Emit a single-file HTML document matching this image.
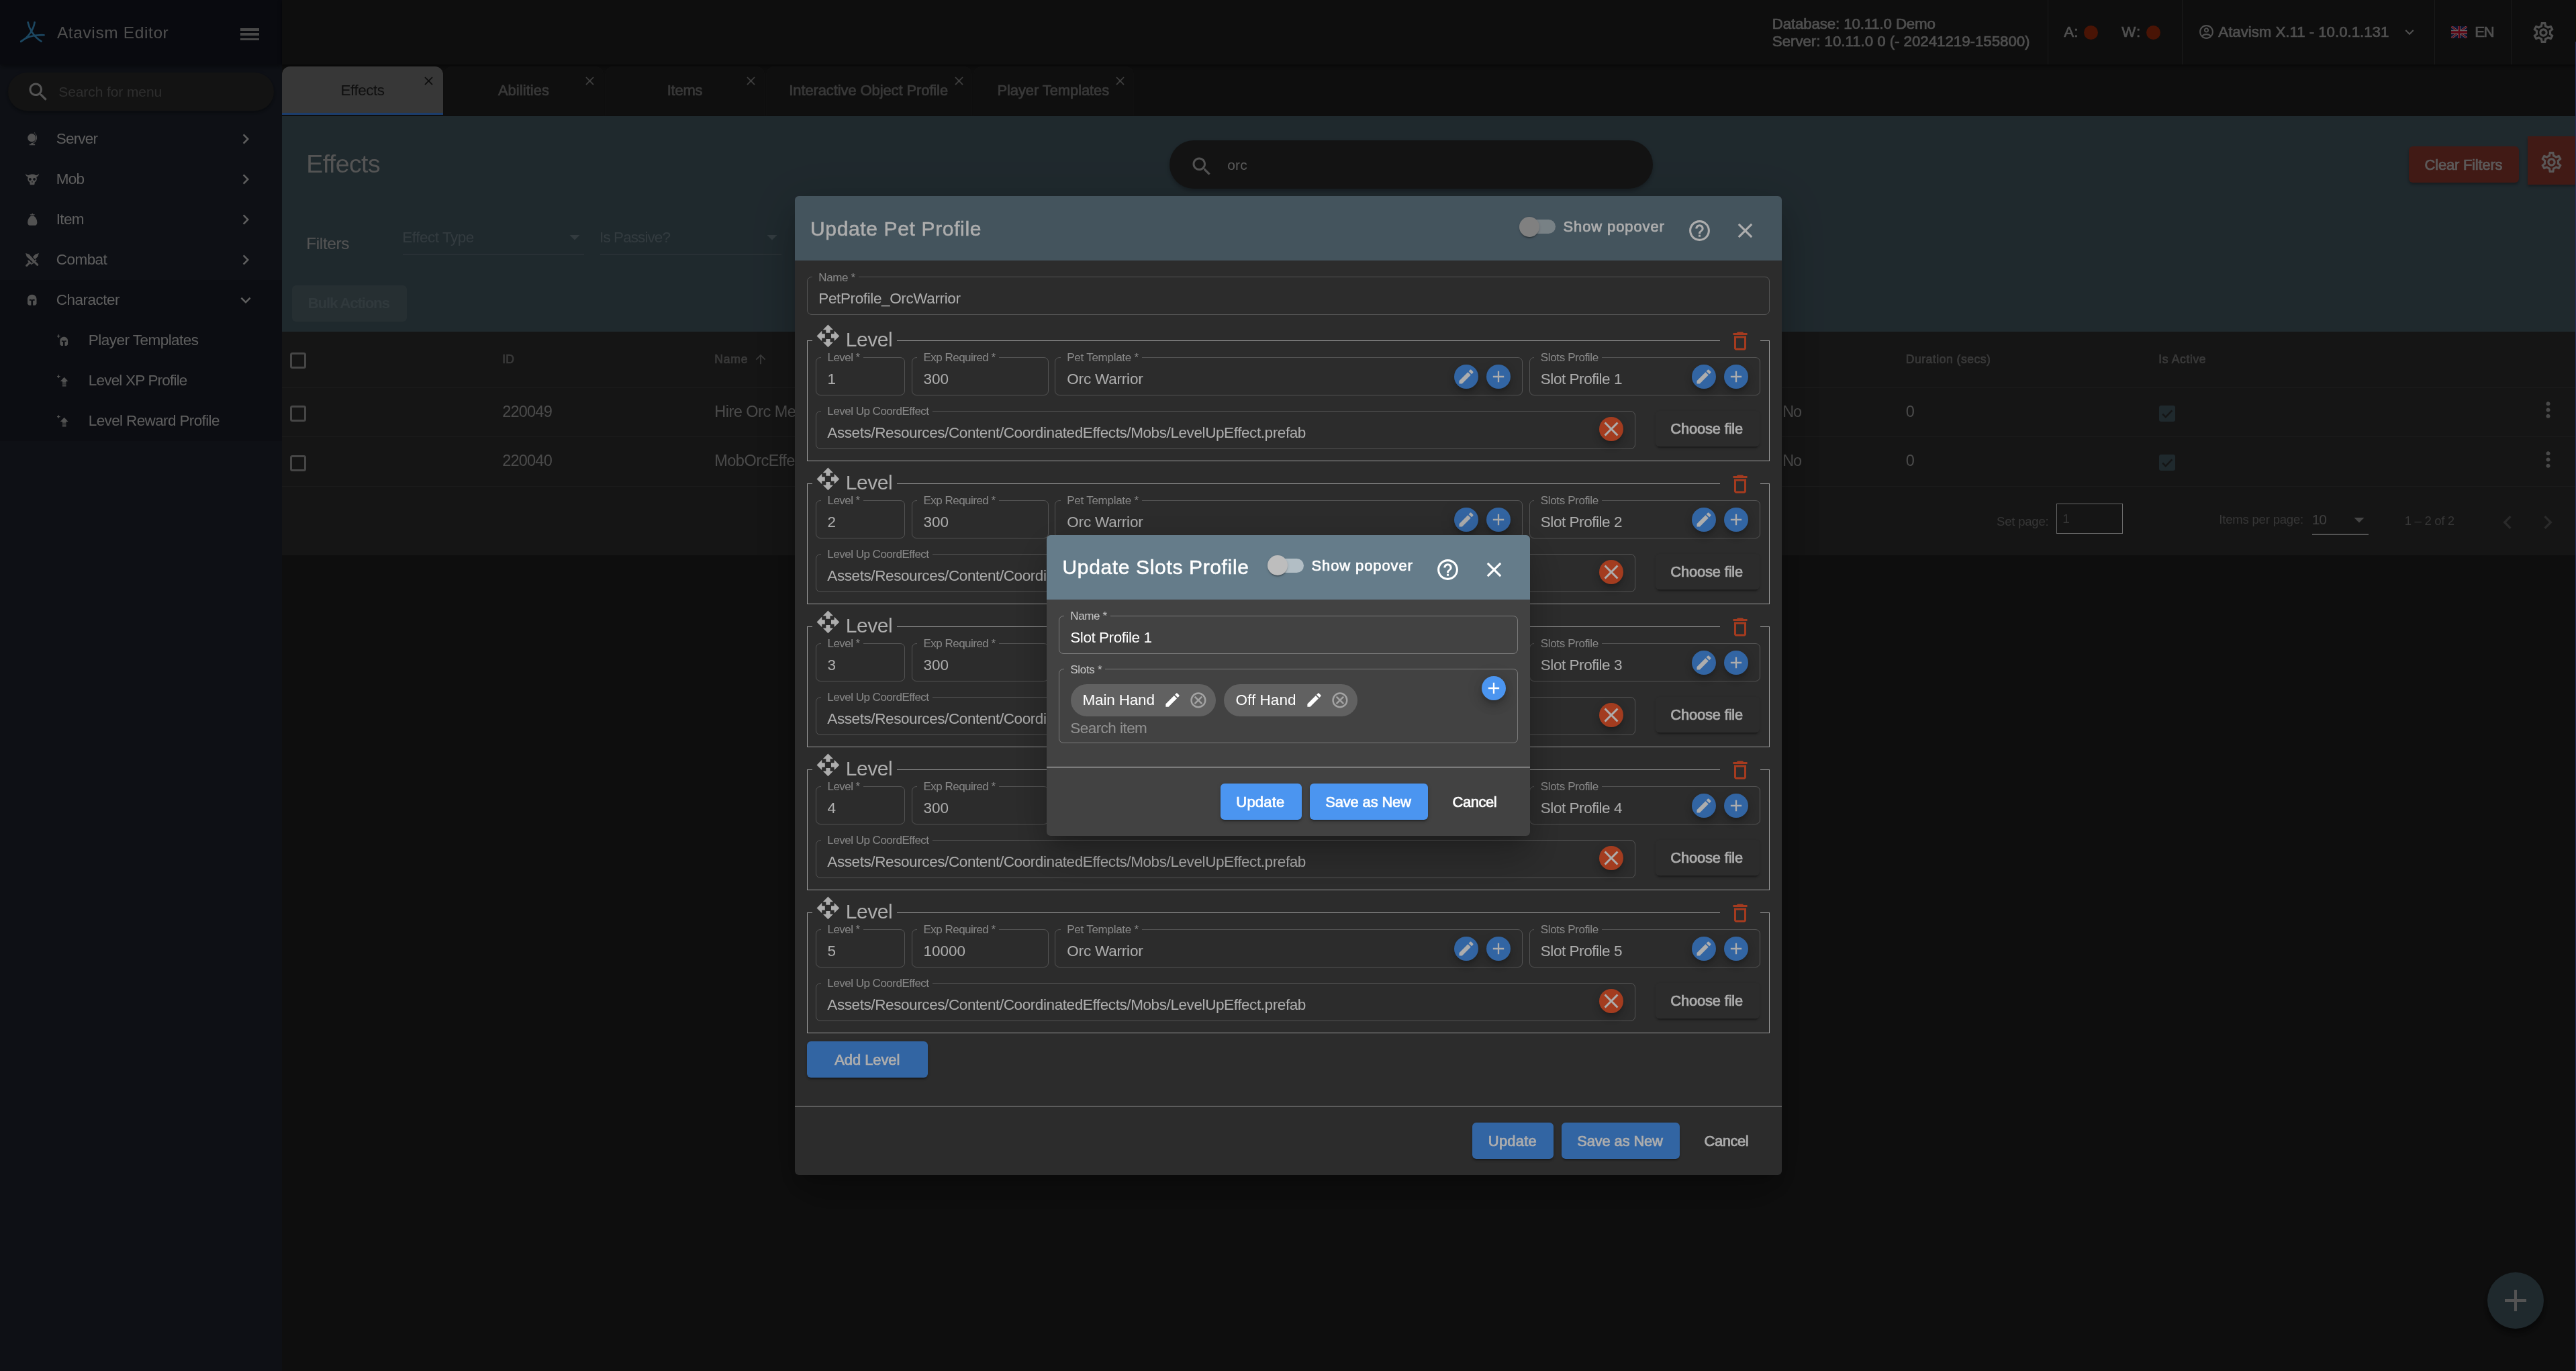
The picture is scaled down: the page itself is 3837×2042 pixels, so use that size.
<!DOCTYPE html>
<html lang="en"><head><meta charset="utf-8"><title>Atavism Editor</title>
<style>
html,body{margin:0;padding:0;background:#212121;}
body{width:3837px;height:2042px;position:relative;font-family:"Liberation Sans",Arial,sans-serif;}
.t{position:absolute;white-space:nowrap;line-height:1em;}
.sb{-webkit-text-stroke:0.7px currentColor;}
.mb{-webkit-text-stroke:0.5px currentColor;}
.ic{position:absolute;display:block;}
.backdrop{position:absolute;left:0;top:0;width:3837px;height:2042px;background:rgba(0,0,0,.32);}
aside,header,nav,main,section{display:block;}
#root{position:absolute;left:0;top:0;width:3837px;height:2042px;overflow:hidden;will-change:transform;}
</style></head><body><div id="root">
<aside id="sidebar">
<div style="position:absolute;left:0.00px;top:0.00px;width:420.00px;height:2042.00px;background:#202530;"></div>
<div style="position:absolute;left:0.00px;top:417.00px;width:420.00px;height:240.00px;background:#1c1e29;"></div>
<div style="position:absolute;left:0.00px;top:0.00px;width:420.00px;height:96.00px;background:#151722;box-shadow:0 3px 8px rgba(0,0,0,.45);"></div>
<svg class="ic" style="left:30px;top:32px" width="37" height="32" viewBox="0 0 37 32"><g fill="none" stroke="#3f9bd4" stroke-width="2.6" stroke-linecap="round"><path d="M11.6 1.2C13 9 19 22 31.5 29.6"/><path d="M21.6 1.2C20 12 12 24 1.2 29.8"/><path d="M1.2 29.8C9 23 22 19.6 35.6 20.2"/></g></svg>
<span class="t" style="left:84.90px;top:36.86px;font-size:24.5px;color:#ababab;letter-spacing:0.612px;">Atavism Editor</span>
<div style="position:absolute;left:358.20px;top:42.20px;width:27.80px;height:3.90px;background:#9c9c9c;"></div>
<div style="position:absolute;left:358.20px;top:49.40px;width:27.80px;height:3.90px;background:#9c9c9c;"></div>
<div style="position:absolute;left:358.20px;top:56.60px;width:27.80px;height:3.90px;background:#9c9c9c;"></div>
<div style="position:absolute;left:12.00px;top:108.00px;width:396.00px;height:57.00px;background:#2a2a2a;border-radius:29px;box-shadow:0 3px 6px rgba(0,0,0,.35);"></div>
<svg class="ic" style="left:39.20px;top:119.20px;" width="36" height="36" viewBox="0 0 24 24"><path fill="#b9b9b9" d="M15.5 14h-.79l-.28-.27C15.41 12.59 16 11.11 16 9.5 16 5.91 13.09 3 9.5 3S3 5.91 3 9.5 5.91 16 9.5 16c1.61 0 3.09-.59 4.23-1.57l.27.28v.79l5 4.99L20.49 19l-4.99-5zm-6 0C7.01 14 5 11.99 5 9.5S7.01 5 9.5 5 14 7.01 14 9.5 11.99 14 9.5 14z"/></svg>
<span class="t" style="left:87.30px;top:126.32px;font-size:21px;color:#666;letter-spacing:-0.100px;">Search for menu</span>
<svg class="ic" style="left:37.0px;top:196.0px" width="22" height="22" viewBox="0 0 24 24" fill="#b4b4b4"><circle cx="11.2" cy="10" r="6.6"/><path d="M15.5 2.2a9.2 9.2 0 0 1-1.6 16.3v1.6h2.6v1.9H7.5v-1.9h2.7v-1.3a9.3 9.3 0 0 0 6.9-14.4z" /><path d="M14.8 2.6l1.2-1.4.6.5-1.2 1.4z"/></svg>
<span class="t" style="left:83.80px;top:195.95px;font-size:22.5px;color:#cdcdcd;letter-spacing:-0.837px;">Server</span>
<svg class="ic" style="left:351.00px;top:192.00px;" width="30" height="30" viewBox="0 0 24 24"><path fill="#cfcfcf" d="M10 6L8.59 7.41 13.17 12l-4.58 4.59L10 18l6-6z"/></svg>
<svg class="ic" style="left:37.0px;top:256.0px" width="22" height="22" viewBox="0 0 24 24" fill="#b4b4b4"><path d="M1 2.6c.4 3.2 1.9 4.9 4.3 5.5A8 8 0 0 0 4.6 11.4c0 2.5 1.3 4.3 3.1 5.3l.6 3.6c.1.5.5.8 1 .8h5.4c.5 0 .9-.3 1-.8l.6-3.6c1.8-1 3.1-2.8 3.1-5.3 0-1.2-.3-2.3-.7-3.3 2.400-.6 3.900-2.300 4.300-5.500-1.500 2-3.400 2.700-5.400 2.800A7.300 7.300 0 0 0 12 3.900c-2.100 0-3.900.600-5.600 1.500C4.400 5.300 2.500 4.600 1 2.600zM8.600 9.800c1.200 0 2.100 1 2.100 2.200s-.9 2.100-2.100 2.100-2.100-.900-2.100-2.100.900-2.200 2.100-2.200zm6.800 0c1.200 0 2.100 1 2.100 2.200s-.9 2.100-2.100 2.100-2.100-.900-2.100-2.100.900-2.200 2.100-2.200zM12 14.600l1.200 2.400h-2.400z" fill-rule="evenodd"/></svg>
<span class="t" style="left:83.80px;top:255.95px;font-size:22.5px;color:#cdcdcd;letter-spacing:-0.757px;">Mob</span>
<svg class="ic" style="left:351.00px;top:252.00px;" width="30" height="30" viewBox="0 0 24 24"><path fill="#cfcfcf" d="M10 6L8.59 7.41 13.17 12l-4.58 4.59L10 18l6-6z"/></svg>
<svg class="ic" style="left:37.75px;top:316.75px" width="20.5" height="20.5" viewBox="0 0 24 24" fill="#b4b4b4"><path d="M9.300 4.800L7.600 2.300l2.200.600L12 1l2.200 1.900 2.200-.600-1.700 2.500zM9 5.800h6c3.300 2.300 5.300 6.600 5.300 11.200 0 3-1.600 5-3.600 5H7.300c-2 0-3.600-2-3.600-5C3.700 12.400 5.700 8.100 9 5.800z"/></svg>
<span class="t" style="left:83.80px;top:315.95px;font-size:22.5px;color:#cdcdcd;letter-spacing:-0.690px;">Item</span>
<svg class="ic" style="left:351.00px;top:312.00px;" width="30" height="30" viewBox="0 0 24 24"><path fill="#cfcfcf" d="M10 6L8.59 7.41 13.17 12l-4.58 4.59L10 18l6-6z"/></svg>
<svg class="ic" style="left:37.0px;top:376.0px" width="22" height="22" viewBox="0 0 24 24" fill="#b4b4b4"><path d="M1.200 1.200l5.700 1.700 9.100 9.800 1.700-1.700 1.500 1.500-2 2 4.400 4.400c.7.700.7 1.700 0 2.400s-1.700.7-2.400 0l-4.400-4.400-2 2-1.500-1.500 1.700-1.700L3 6.700zM22.800 1.200L21 6.700l-4.600 4.400-3.500-3.700 4.200-4.500zM8.900 14.900l2.200 2.300-.200.200 1.200 1.200-1.500 1.500-2-2-4.400 4.400c-.7.700-1.700.7-2.400 0s-.7-1.700 0-2.400l4.400-4.400-2-2 1.500-1.500 1.700 1.700.800-.800z"/></svg>
<span class="t" style="left:83.80px;top:375.95px;font-size:22.5px;color:#cdcdcd;letter-spacing:-0.548px;">Combat</span>
<svg class="ic" style="left:351.00px;top:372.00px;" width="30" height="30" viewBox="0 0 24 24"><path fill="#cfcfcf" d="M10 6L8.59 7.41 13.17 12l-4.58 4.59L10 18l6-6z"/></svg>
<svg class="ic" style="left:38.25px;top:437.25px" width="19.5" height="19.5" viewBox="0 0 24 24" fill="#b4b4b4"><path d="M12 2.200c-5 0-8.300 3.600-8.300 8.600v8.500l2.600 2.600h4v-8.600H7.200v-2.500h3.700l1.100 1.700 1.100-1.700h3.700v2.500h-3.100v8.600h4l2.600-2.600v-8.500c0-5-3.300-8.600-8.300-8.600z"/></svg>
<span class="t" style="left:83.80px;top:435.95px;font-size:22.5px;color:#cdcdcd;letter-spacing:-0.505px;">Character</span>
<svg class="ic" style="left:351.00px;top:432.00px;" width="30" height="30" viewBox="0 0 24 24"><path fill="#cfcfcf" d="M16.59 8.59L12 13.17 7.41 8.59 6 10l6 6 6-6z"/></svg>
<svg class="ic" style="left:84.0px;top:497.0px" width="20" height="20" viewBox="0 0 24 24" fill="#b4b4b4"><path d="M13.500 5.600c-4.200 0-7 3-7 7.200v6.600l2.200 2.200h3.200v-7.200H9.400v-2h3.100l1 1.400 1-1.400h3.100v2h-2.500v7.200h3.200l2.200-2.200v-6.600c0-4.200-2.800-7.200-7-7.200zM3.200 1.600h1.500v2h2v1.500h-2v2H3.200v-2h-2V3.600h2z"/></svg>
<span class="t" style="left:131.80px;top:495.95px;font-size:22.5px;color:#cdcdcd;letter-spacing:-0.526px;">Player Templates</span>
<svg class="ic" style="left:84.0px;top:557.0px" width="20" height="20" viewBox="0 0 24 24" fill="#b4b4b4"><path d="M14 5.800l7 7.400h-3.600v2H10.600v-2H7zM10.600 16.200h6.800v1.500h-6.800zm0 2.300h6.800V20h-6.800zm0 2.300h6.800v1.500h-6.800zM3.200 1.600h1.500v2h2v1.500h-2v2H3.200v-2h-2V3.600h2z"/></svg>
<span class="t" style="left:131.80px;top:555.95px;font-size:22.5px;color:#cdcdcd;letter-spacing:-0.808px;">Level XP Profile</span>
<svg class="ic" style="left:84.0px;top:617.0px" width="20" height="20" viewBox="0 0 24 24" fill="#b4b4b4"><path d="M14 5.800l7 7.400h-3.600v2H10.600v-2H7zM10.600 16.200h6.800v1.500h-6.800zm0 2.300h6.800V20h-6.800zm0 2.300h6.800v1.500h-6.800zM3.200 1.600h1.500v2h2v1.500h-2v2H3.200v-2h-2V3.600h2z"/></svg>
<span class="t" style="left:131.80px;top:615.95px;font-size:22.5px;color:#cdcdcd;letter-spacing:-0.630px;">Level Reward Profile</span>
</aside>
<header id="topbar">
<div style="position:absolute;left:420.00px;top:0.00px;width:3417.00px;height:172.00px;background:#1f1f1f;"></div>
<div style="position:absolute;left:420.00px;top:0.00px;width:3417.00px;height:96.00px;background:#1f1f1f;box-shadow:0 2px 5px rgba(0,0,0,.55);"></div>
<span class="t sb" style="left:2639.80px;top:25.20px;font-size:22.33px;color:#adadad;letter-spacing:-0.164px;">Database: 10.11.0 Demo</span>
<span class="t sb" style="left:2639.80px;top:50.70px;font-size:22.33px;color:#adadad;letter-spacing:-0.052px;">Server: 10.11.0 0 (- 20241219-155800)</span>
<div style="position:absolute;left:3049.50px;top:0.00px;width:1.00px;height:96.00px;background:#3a3a3a;"></div>
<div style="position:absolute;left:3249.50px;top:0.00px;width:1.00px;height:96.00px;background:#3a3a3a;"></div>
<div style="position:absolute;left:3625.50px;top:0.00px;width:1.00px;height:96.00px;background:#3a3a3a;"></div>
<div style="position:absolute;left:3739.50px;top:0.00px;width:1.00px;height:96.00px;background:#3a3a3a;"></div>
<span class="t sb" style="left:3074.30px;top:37.40px;font-size:22.33px;color:#adadad;letter-spacing:-0.049px;">A:</span>
<div style="position:absolute;left:3103.50px;top:37.50px;width:21.00px;height:21.00px;background:#a02d0c;border-radius:50%;"></div>
<span class="t sb" style="left:3160.30px;top:37.40px;font-size:22.33px;color:#adadad;letter-spacing:1.062px;">W:</span>
<div style="position:absolute;left:3196.50px;top:37.50px;width:21.00px;height:21.00px;background:#a02d0c;border-radius:50%;"></div>
<svg class="ic" style="left:3274.30px;top:35.00px;" width="25" height="25" viewBox="0 0 24 24"><path fill="#adadad" d="M12 2C6.48 2 2 6.48 2 12s4.48 10 10 10 10-4.48 10-10S17.52 2 12 2zM7.07 18.28c.43-.9 3.05-1.78 4.93-1.78s4.51.88 4.93 1.78C15.57 19.36 13.86 20 12 20s-3.57-.64-4.93-1.72zm11.29-1.45c-1.43-1.74-4.9-2.33-6.36-2.33s-4.93.59-6.36 2.33C4.62 15.49 4 13.82 4 12c0-4.41 3.59-8 8-8s8 3.59 8 8c0 1.82-.62 3.49-1.64 4.83zM12 6c-1.94 0-3.5 1.56-3.5 3.5S10.06 13 12 13s3.5-1.56 3.5-3.5S13.94 6 12 6zm0 5c-.83 0-1.5-.67-1.5-1.5S11.17 8 12 8s1.5.67 1.5 1.5S12.83 11 12 11z"/></svg>
<span class="t sb" style="left:3304.30px;top:37.40px;font-size:22.33px;color:#adadad;letter-spacing:-0.051px;">Atavism X.11 - 10.0.1.131</span>
<svg class="ic" style="left:3576.00px;top:34.50px;" width="26" height="26" viewBox="0 0 24 24"><path fill="#adadad" d="M16.59 8.59L12 13.17 7.41 8.59 6 10l6 6 6-6z"/></svg>
<svg class="ic" style="left:3650.5px;top:39px" width="24" height="18" viewBox="0 0 60 30" preserveAspectRatio="none"><clipPath id="fc"><path d="M0 0v30h60V0z"/></clipPath><g clip-path="url(#fc)"><path d="M0 0v30h60V0z" fill="#1a2a6c"/><path d="M0 0l60 30m0-30L0 30" stroke="#ddd" stroke-width="6"/><path d="M0 0l60 30m0-30L0 30" stroke="#c8102e" stroke-width="3"/><path d="M30 0v30M0 15h60" stroke="#ddd" stroke-width="10"/><path d="M30 0v30M0 15h60" stroke="#c8102e" stroke-width="6"/></g></svg>
<span class="t sb" style="left:3686.30px;top:37.40px;font-size:22.33px;color:#adadad;letter-spacing:-1.636px;">EN</span>
<svg class="ic" style="left:3769.50px;top:29.50px;" width="37" height="37" viewBox="0 0 24 24"><path fill="#adadad" d="M19.43 12.98c.04-.32.07-.64.07-.98 0-.34-.03-.66-.07-.98l2.11-1.65c.19-.15.24-.42.12-.64l-2-3.46c-.09-.16-.26-.25-.44-.25-.06 0-.12.01-.17.03l-2.49 1c-.52-.4-1.08-.73-1.69-.98l-.38-2.65C14.46 2.18 14.25 2 14 2h-4c-.25 0-.46.18-.49.42l-.38 2.65c-.61.25-1.17.59-1.69.98l-2.49-1c-.06-.02-.12-.03-.18-.03-.17 0-.34.09-.43.25l-2 3.46c-.13.22-.07.49.12.64l2.11 1.65c-.04.32-.07.65-.07.98 0 .33.03.66.07.98l-2.11 1.65c-.19.15-.24.42-.12.64l2 3.46c.09.16.26.25.44.25.06 0 .12-.01.17-.03l2.49-1c.52.4 1.08.73 1.69.98l.38 2.65c.03.24.24.42.49.42h4c.25 0 .46-.18.49-.42l.38-2.65c.61-.25 1.17-.59 1.69-.98l2.49 1c.06.02.12.03.18.03.17 0 .34-.09.43-.25l2-3.46c.12-.22.07-.49-.12-.64l-2.11-1.65zm-1.98-1.71c.04.31.05.52.05.73 0 .21-.02.43-.05.73l-.14 1.13.89.7 1.08.84-.7 1.21-1.27-.51-1.04-.42-.9.68c-.43.32-.84.56-1.25.73l-1.06.43-.16 1.13-.2 1.35h-1.4l-.19-1.35-.16-1.13-1.06-.43c-.43-.18-.83-.41-1.23-.71l-.91-.7-1.06.43-1.27.51-.7-1.21 1.08-.84.89-.7-.14-1.13c-.03-.31-.05-.54-.05-.74s.02-.43.05-.73l.14-1.13-.89-.7-1.08-.84.7-1.21 1.27.51 1.04.42.9-.68c.43-.32.84-.56 1.25-.73l1.06-.43.16-1.13.2-1.35h1.39l.19 1.35.16 1.13 1.06.43c.43.18.83.41 1.23.71l.91.7 1.06-.43 1.27-.51.7 1.21-1.07.85-.89.7.14 1.13zM12 8c-2.21 0-4 1.79-4 4s1.79 4 4 4 4-1.79 4-4-1.79-4-4-4zm0 6c-1.1 0-2-.9-2-2s.9-2 2-2 2 .9 2 2-.9 2-2 2z"/></svg>
</header>
<nav id="tabs">
<div style="position:absolute;left:420.00px;top:99.00px;width:240.00px;height:72.00px;background:#787878;border-radius:12px 12px 0 0;border-bottom:3.5px solid #3f86ec;box-sizing:border-box;"></div>
<span class="t" style="left:507.50px;top:123.55px;font-size:22.5px;color:#222;letter-spacing:-0.481px;">Effects</span>
<svg class="ic" style="left:628.25px;top:110.25px;" width="21" height="21" viewBox="0 0 24 24"><path fill="#1c1c1c" d="M19 6.41L17.59 5 12 10.59 6.41 5 5 6.41 10.59 12 5 17.59 6.41 19 12 13.41 17.59 19 19 17.59 13.41 12z"/></svg>
<div style="position:absolute;left:661.00px;top:99.00px;width:238.00px;height:73.00px;background:#222;border-radius:12px 12px 0 0;border:1px solid #262626;border-bottom:0;box-sizing:border-box;"></div>
<span class="t sb" style="left:741.88px;top:123.53px;font-size:21.94px;color:#7c7c7c;letter-spacing:0.072px;">Abilities</span>
<svg class="ic" style="left:868.20px;top:110.25px;" width="21" height="21" viewBox="0 0 24 24"><path fill="#8a8a8a" d="M19 6.41L17.59 5 12 10.59 6.41 5 5 6.41 10.59 12 5 17.59 6.41 19 12 13.41 17.59 19 19 17.59 13.41 12z"/></svg>
<div style="position:absolute;left:901.00px;top:99.00px;width:238.00px;height:73.00px;background:#222;border-radius:12px 12px 0 0;border:1px solid #262626;border-bottom:0;box-sizing:border-box;"></div>
<span class="t sb" style="left:993.75px;top:123.53px;font-size:21.94px;color:#7c7c7c;letter-spacing:-0.228px;">Items</span>
<svg class="ic" style="left:1108.20px;top:110.25px;" width="21" height="21" viewBox="0 0 24 24"><path fill="#8a8a8a" d="M19 6.41L17.59 5 12 10.59 6.41 5 5 6.41 10.59 12 5 17.59 6.41 19 12 13.41 17.59 19 19 17.59 13.41 12z"/></svg>
<div style="position:absolute;left:1141.00px;top:99.00px;width:307.40px;height:73.00px;background:#222;border-radius:12px 12px 0 0;border:1px solid #262626;border-bottom:0;box-sizing:border-box;"></div>
<span class="t sb" style="left:1175.30px;top:123.53px;font-size:21.94px;color:#7c7c7c;letter-spacing:-0.087px;">Interactive Object Profile</span>
<svg class="ic" style="left:1417.60px;top:110.25px;" width="21" height="21" viewBox="0 0 24 24"><path fill="#8a8a8a" d="M19 6.41L17.59 5 12 10.59 6.41 5 5 6.41 10.59 12 5 17.59 6.41 19 12 13.41 17.59 19 19 17.59 13.41 12z"/></svg>
<div style="position:absolute;left:1450.40px;top:99.00px;width:238.60px;height:73.00px;background:#222;border-radius:12px 12px 0 0;border:1px solid #262626;border-bottom:0;box-sizing:border-box;"></div>
<span class="t sb" style="left:1485.50px;top:123.53px;font-size:21.94px;color:#7c7c7c;letter-spacing:-0.080px;">Player Templates</span>
<svg class="ic" style="left:1658.20px;top:110.25px;" width="21" height="21" viewBox="0 0 24 24"><path fill="#8a8a8a" d="M19 6.41L17.59 5 12 10.59 6.41 5 5 6.41 10.59 12 5 17.59 6.41 19 12 13.41 17.59 19 19 17.59 13.41 12z"/></svg>
</nav>
<main id="content">
<div style="position:absolute;left:420.00px;top:172.50px;width:3417.00px;height:321.50px;background:#455a64;"></div>
<span class="t" style="left:456.30px;top:225.69px;font-size:37.4px;color:#b9b9b9;letter-spacing:-0.556px;">Effects</span>
<div style="position:absolute;left:1742.00px;top:209.00px;width:720.00px;height:72.00px;background:#2b2b2b;border-radius:36px;box-shadow:0 3px 6px rgba(0,0,0,.3);"></div>
<svg class="ic" style="left:1772.00px;top:230.40px;" width="36" height="36" viewBox="0 0 24 24"><path fill="#b4b4b4" d="M15.5 14h-.79l-.28-.27C15.41 12.59 16 11.11 16 9.5 16 5.91 13.09 3 9.5 3S3 5.91 3 9.5 5.91 16 9.5 16c1.61 0 3.09-.59 4.23-1.57l.27.28v.79l5 4.99L20.49 19l-4.99-5zm-6 0C7.01 14 5 11.99 5 9.5S7.01 5 9.5 5 14 7.01 14 9.5 11.99 14 9.5 14z"/></svg>
<span class="t" style="left:1828.30px;top:235.22px;font-size:21px;color:#c4c4c4;letter-spacing:0.109px;">orc</span>
<div style="position:absolute;left:3588.00px;top:218.00px;width:164.00px;height:53.50px;background:#8f3a30;border-radius:6px;box-shadow:0 3px 4px rgba(0,0,0,.3);"></div>
<span class="t sb" style="left:3611.55px;top:234.53px;font-size:21.94px;color:#c9c4c4;letter-spacing:-0.193px;">Clear Filters</span>
<div style="position:absolute;left:3765.00px;top:203.00px;width:72.00px;height:71.50px;background:#8f3a30;box-shadow:0 3px 4px rgba(0,0,0,.3);"></div>
<svg class="ic" style="left:3782.00px;top:222.75px;" width="37" height="37" viewBox="0 0 24 24"><path fill="#c4bdbd" d="M19.43 12.98c.04-.32.07-.64.07-.98 0-.34-.03-.66-.07-.98l2.11-1.65c.19-.15.24-.42.12-.64l-2-3.46c-.09-.16-.26-.25-.44-.25-.06 0-.12.01-.17.03l-2.49 1c-.52-.4-1.08-.73-1.69-.98l-.38-2.65C14.46 2.18 14.25 2 14 2h-4c-.25 0-.46.18-.49.42l-.38 2.65c-.61.25-1.17.59-1.69.98l-2.49-1c-.06-.02-.12-.03-.18-.03-.17 0-.34.09-.43.25l-2 3.46c-.13.22-.07.49.12.64l2.11 1.65c-.04.32-.07.65-.07.98 0 .33.03.66.07.98l-2.11 1.65c-.19.15-.24.42-.12.64l2 3.46c.09.16.26.25.44.25.06 0 .12-.01.17-.03l2.49-1c.52.4 1.08.73 1.69.98l.38 2.65c.03.24.24.42.49.42h4c.25 0 .46-.18.49-.42l.38-2.65c.61-.25 1.17-.59 1.69-.98l2.49 1c.06.02.12.03.18.03.17 0 .34-.09.43-.25l2-3.46c.12-.22.07-.49-.12-.64l-2.11-1.65zm-1.98-1.71c.04.31.05.52.05.73 0 .21-.02.43-.05.73l-.14 1.13.89.7 1.08.84-.7 1.21-1.27-.51-1.04-.42-.9.68c-.43.32-.84.56-1.25.73l-1.06.43-.16 1.13-.2 1.35h-1.4l-.19-1.35-.16-1.13-1.06-.43c-.43-.18-.83-.41-1.23-.71l-.91-.7-1.06.43-1.27.51-.7-1.21 1.08-.84.89-.7-.14-1.13c-.03-.31-.05-.54-.05-.74s.02-.43.05-.73l.14-1.13-.89-.7-1.08-.84.7-1.21 1.27.51 1.04.42.9-.68c.43-.32.84-.56 1.25-.73l1.06-.43.16-1.13.2-1.35h1.39l.19 1.35.16 1.13 1.06.43c.43.18.83.41 1.23.71l.91.7 1.06-.43 1.27-.51.7 1.21-1.07.85-.89.7.14 1.13zM12 8c-2.21 0-4 1.79-4 4s1.79 4 4 4 4-1.79 4-4-1.79-4-4-4zm0 6c-1.1 0-2-.9-2-2s.9-2 2-2 2 .9 2 2-.9 2-2 2z"/></svg>
<span class="t" style="left:456.30px;top:351.11px;font-size:24.5px;color:#b9b9b9;letter-spacing:-0.421px;">Filters</span>
<span class="t" style="left:599.30px;top:342.80px;font-size:22.5px;color:#70828b;letter-spacing:-0.477px;">Effect Type</span>
<div style="position:absolute;left:600.00px;top:378.00px;width:269.50px;height:1.50px;background:#586a73;"></div>
<svg class="ic" style="left:838.00px;top:335.00px;" width="36" height="36" viewBox="0 0 24 24"><path fill="#70828b" d="M7 10l5 5 5-5z"/></svg>
<span class="t" style="left:893.05px;top:342.80px;font-size:22.5px;color:#70828b;letter-spacing:-0.914px;">Is Passive?</span>
<div style="position:absolute;left:893.75px;top:378.00px;width:269.75px;height:1.50px;background:#586a73;"></div>
<svg class="ic" style="left:1132.00px;top:335.00px;" width="36" height="36" viewBox="0 0 24 24"><path fill="#70828b" d="M7 10l5 5 5-5z"/></svg>
<div style="position:absolute;left:435.00px;top:425.00px;width:170.50px;height:53.50px;background:#54676f;border-radius:6px;"></div>
<span class="t" style="left:458.55px;top:440.80px;font-size:22.5px;color:#6a7c84;letter-spacing:-1.286px;font-weight:700;">Bulk Actions</span>
<div style="position:absolute;left:420.00px;top:494.00px;width:3417.00px;height:333.00px;background:#2e2e2e;"></div>
<div style="position:absolute;left:420.00px;top:576.50px;width:3417.00px;height:1.50px;background:#3d3d3d;"></div>
<div style="position:absolute;left:420.00px;top:649.50px;width:3417.00px;height:1.50px;background:#3d3d3d;"></div>
<div style="position:absolute;left:420.00px;top:723.50px;width:3417.00px;height:1.50px;background:#3d3d3d;"></div>
<div style="position:absolute;left:432.00px;top:525.00px;width:24.00px;height:24.00px;border:3px solid #9a9a9a;border-radius:3.5px;box-sizing:border-box;"></div>
<div style="position:absolute;left:432.00px;top:604.00px;width:24.00px;height:24.00px;border:3px solid #9a9a9a;border-radius:3.5px;box-sizing:border-box;"></div>
<div style="position:absolute;left:432.00px;top:677.50px;width:24.00px;height:24.00px;border:3px solid #9a9a9a;border-radius:3.5px;box-sizing:border-box;"></div>
<span class="t sb" style="left:748.30px;top:526.74px;font-size:17.55px;color:#7d7d7d;letter-spacing:-0.025px;">ID</span>
<span class="t sb" style="left:1064.30px;top:526.74px;font-size:17.55px;color:#7d7d7d;letter-spacing:0.796px;">Name</span>
<svg class="ic" style="left:1122.00px;top:523.70px;" width="22" height="22" viewBox="0 0 24 24"><path fill="#7d7d7d" d="M4 12l1.41 1.41L11 7.83V20h2V7.83l5.58 5.59L20 12l-8-8-8 8z"/></svg>
<span class="t sb" style="left:2838.80px;top:526.74px;font-size:17.55px;color:#7d7d7d;letter-spacing:0.514px;">Duration (secs)</span>
<span class="t sb" style="left:3215.30px;top:526.74px;font-size:17.55px;color:#7d7d7d;letter-spacing:0.628px;">Is Active</span>
<span class="t" style="left:748.30px;top:601.51px;font-size:23.5px;color:#a3a3a3;letter-spacing:-0.803px;">220049</span>
<span class="t" style="left:1064.30px;top:601.51px;font-size:23.5px;color:#a3a3a3;letter-spacing:-0.513px;">Hire Orc Mercenary</span>
<span class="t" style="left:2655.30px;top:601.51px;font-size:23.5px;color:#a3a3a3;letter-spacing:-1.271px;">No</span>
<span class="t" style="left:2838.80px;top:601.51px;font-size:23.5px;color:#a3a3a3;">0</span>
<div style="position:absolute;left:3216.00px;top:604.00px;width:24.00px;height:24.00px;background:#455a64;border-radius:3px;"><svg width="24" height="24" viewBox="0 0 24 24" style="position:absolute;left:0;top:0"><path fill="none" stroke="#2e2e2e" stroke-width="2.6" d="M5.2 12.6l4.6 4.6L19.4 7.4"/></svg></div>
<svg class="ic" style="left:3776.50px;top:591.80px;" width="37" height="37" viewBox="0 0 24 24"><path fill="#a0a0a0" d="M12 8c1.1 0 2-.9 2-2s-.9-2-2-2-2 .9-2 2 .9 2 2 2zm0 2c-1.1 0-2 .9-2 2s.9 2 2 2 2-.9 2-2-.9-2-2-2zm0 6c-1.1 0-2 .9-2 2s.9 2 2 2 2-.9 2-2-.9-2-2-2z"/></svg>
<span class="t" style="left:748.30px;top:675.01px;font-size:23.5px;color:#a3a3a3;letter-spacing:-0.803px;">220040</span>
<span class="t" style="left:1064.30px;top:675.01px;font-size:23.5px;color:#a3a3a3;letter-spacing:-0.537px;">MobOrcEffect</span>
<span class="t" style="left:2655.30px;top:675.01px;font-size:23.5px;color:#a3a3a3;letter-spacing:-1.271px;">No</span>
<span class="t" style="left:2838.80px;top:675.01px;font-size:23.5px;color:#a3a3a3;">0</span>
<div style="position:absolute;left:3216.00px;top:677.40px;width:24.00px;height:24.00px;background:#455a64;border-radius:3px;"><svg width="24" height="24" viewBox="0 0 24 24" style="position:absolute;left:0;top:0"><path fill="none" stroke="#2e2e2e" stroke-width="2.6" d="M5.2 12.6l4.6 4.6L19.4 7.4"/></svg></div>
<svg class="ic" style="left:3776.50px;top:665.50px;" width="37" height="37" viewBox="0 0 24 24"><path fill="#a0a0a0" d="M12 8c1.1 0 2-.9 2-2s-.9-2-2-2-2 .9-2 2 .9 2 2 2zm0 2c-1.1 0-2 .9-2 2s.9 2 2 2 2-.9 2-2-.9-2-2-2zm0 6c-1.1 0-2 .9-2 2s.9 2 2 2 2-.9 2-2-.9-2-2-2z"/></svg>
<span class="t" style="left:2974.10px;top:768.44px;font-size:18.5px;color:#787878;letter-spacing:-0.212px;">Set page:</span>
<div style="position:absolute;left:3063.00px;top:750.00px;width:99.00px;height:44.60px;border:1px solid #e8e8e8;box-sizing:border-box;"></div>
<span class="t" style="left:3072.30px;top:762.52px;font-size:19px;color:#7a7a7a;">1</span>
<span class="t" style="left:3305.30px;top:764.94px;font-size:18.5px;color:#787878;letter-spacing:-0.190px;">Items per page:</span>
<span class="t" style="left:3443.80px;top:762.82px;font-size:21px;color:#8a8a8a;letter-spacing:-1.180px;">10</span>
<div style="position:absolute;left:3444.00px;top:794.50px;width:84.00px;height:2.00px;background:#b5b5b5;"></div>
<svg class="ic" style="left:3496.00px;top:755.50px;" width="36" height="36" viewBox="0 0 24 24"><path fill="#9a9a9a" d="M7 10l5 5 5-5z"/></svg>
<span class="t" style="left:3581.80px;top:766.54px;font-size:18.5px;color:#787878;letter-spacing:-0.314px;">1 – 2 of 2</span>
<svg class="ic" style="left:3715.00px;top:758.00px;" width="40" height="40" viewBox="0 0 24 24"><path fill="#5c5c5c" d="M15.41 7.41L14 6l-6 6 6 6 1.41-1.41L10.83 12z"/></svg>
<svg class="ic" style="left:3775.40px;top:758.00px;" width="40" height="40" viewBox="0 0 24 24"><path fill="#5c5c5c" d="M10 6L8.59 7.41 13.17 12l-4.58 4.59L10 18l6-6z"/></svg>
<div style="position:absolute;left:3704.50px;top:1895.00px;width:84.00px;height:84.00px;background:#455a64;border-radius:50%;box-shadow:0 5px 8px rgba(0,0,0,.35),0 9px 18px rgba(0,0,0,.25);"></div>
<div style="position:absolute;left:3730.50px;top:1935.00px;width:32.00px;height:4.00px;background:#b5b5b5;"></div>
<div style="position:absolute;left:3744.50px;top:1921.00px;width:4.00px;height:32.00px;background:#b5b5b5;"></div>
</main>
<div class="backdrop"></div>
<section id="pet-dialog">
<div style="position:absolute;left:1184.00px;top:292.00px;width:1469.80px;height:1457.50px;background:#424242;border-radius:6px;box-shadow:0 16px 22px -10px rgba(0,0,0,.2),0 36px 57px 4px rgba(0,0,0,.14),0 13px 69px 12px rgba(0,0,0,.12);"></div>
<div style="position:absolute;left:1184.00px;top:292.00px;width:1469.80px;height:95.50px;background:#657c8a;border-radius:6px 6px 0 0;"></div>
<span class="t mb" style="left:1207.05px;top:326.46px;font-size:30px;color:#fff;letter-spacing:0.640px;">Update Pet Profile</span>
<div style="position:absolute;left:2262.50px;top:327.00px;width:54.00px;height:21.00px;background:rgba(255,255,255,.5);border-radius:10.5px;"></div><div style="position:absolute;left:2262.50px;top:322.50px;width:30.00px;height:30.00px;background:#bdbdbd;border-radius:50%;box-shadow:0 3px 1.5px -1.5px rgba(0,0,0,.2),0 1.5px 1.5px rgba(0,0,0,.14),0 1.5px 4.5px rgba(0,0,0,.12);"></div>
<span class="t sb" style="left:2328.55px;top:327.28px;font-size:21.94px;color:#fff;letter-spacing:0.915px;">Show popover</span>
<svg class="ic" style="left:2513.00px;top:324.50px;" width="37" height="37" viewBox="0 0 24 24"><path fill="#fff" d="M11 18h2v-2h-2v2zm1-16C6.48 2 2 6.48 2 12s4.48 10 10 10 10-4.48 10-10S17.52 2 12 2zm0 18c-4.41 0-8-3.59-8-8s3.59-8 8-8 8 3.59 8 8-3.59 8-8 8zm0-14c-2.21 0-4 1.79-4 4h2c0-1.1.9-2 2-2s2 .9 2 2c0 2-3 1.75-3 5h2c0-2.25 3-2.5 3-5 0-2.21-1.79-4-4-4z"/></svg>
<svg class="ic" style="left:2581.00px;top:324.50px;" width="37" height="37" viewBox="0 0 24 24"><path fill="#fff" d="M19 6.41L17.59 5 12 10.59 6.41 5 5 6.41 10.59 12 5 17.59 6.41 19 12 13.41 17.59 19 19 17.59 13.41 12z"/></svg>
<div style="position:absolute;left:1201.50px;top:412.00px;width:1434.00px;height:57.00px;border:1px solid rgba(255,255,255,.3);border-radius:7px;box-sizing:border-box;"></div><div style="position:absolute;left:1209.50px;top:410.50px;width:69.30px;height:5.00px;background:#424242;"></div><span class="t" style="left:1219.30px;top:404.51px;font-size:17px;color:rgba(255,255,255,.7);letter-spacing:-0.365px;">Name *</span><span class="t" style="left:1219.30px;top:434.05px;font-size:22.5px;color:#fff;letter-spacing:-0.379px;">PetProfile_OrcWarrior</span>
<div style="position:absolute;left:1201.50px;top:507.30px;width:1434.00px;height:179.90px;border:1px solid #e6e6e6;box-sizing:border-box;"></div>
<div style="position:absolute;left:1209.50px;top:505.80px;width:126.00px;height:5.00px;background:#424242;"></div>
<svg class="ic" style="left:1214.60px;top:481.70px;" width="36.8" height="36.8" viewBox="0 0 24 24"><path fill="#fff" d="M10 9h4V6h3l-5-5-5 5h3v3zm-1 1H6V7l-5 5 5 5v-3h3v-4zm14 2l-5-5v3h-3v4h3v3l5-5zm-9 3h-4v3H7l5 5 5-5h-3v-3z"/></svg>
<span class="t" style="left:1259.70px;top:491.41px;font-size:30px;color:#fff;letter-spacing:-0.444px;">Level</span>
<div style="position:absolute;left:2562.00px;top:505.80px;width:59.50px;height:5.00px;background:#424242;"></div>
<svg class="ic" style="left:2573.50px;top:490.30px;" width="36" height="36" viewBox="0 0 24 24"><path fill="#f4582e" d="M6 19c0 1.1.9 2 2 2h8c1.1 0 2-.9 2-2V7H6v12zM8 9h8v10H8V9zm7.5-5l-1-1h-5l-1 1H5v2h14V4z"/></svg>
<div style="position:absolute;left:1214.50px;top:532.30px;width:133.50px;height:56.50px;border:1px solid rgba(255,255,255,.3);border-radius:7px;box-sizing:border-box;"></div><div style="position:absolute;left:1222.75px;top:530.80px;width:62.80px;height:5.00px;background:#424242;"></div><span class="t" style="left:1232.55px;top:523.81px;font-size:17px;color:rgba(255,255,255,.7);letter-spacing:-0.569px;">Level *</span><span class="t" style="left:1232.55px;top:554.35px;font-size:22.5px;color:#fff;">1</span>
<div style="position:absolute;left:1357.50px;top:532.30px;width:204.25px;height:56.50px;border:1px solid rgba(255,255,255,.3);border-radius:7px;box-sizing:border-box;"></div><div style="position:absolute;left:1365.75px;top:530.80px;width:121.80px;height:5.00px;background:#424242;"></div><span class="t" style="left:1375.55px;top:523.81px;font-size:17px;color:rgba(255,255,255,.7);letter-spacing:-0.525px;">Exp Required *</span><span class="t" style="left:1375.55px;top:554.35px;font-size:22.5px;color:#fff;">300</span>
<div style="position:absolute;left:1571.25px;top:532.30px;width:696.75px;height:56.50px;border:1px solid rgba(255,255,255,.3);border-radius:7px;box-sizing:border-box;"></div><div style="position:absolute;left:1579.50px;top:530.80px;width:121.30px;height:5.00px;background:#424242;"></div><span class="t" style="left:1589.30px;top:523.81px;font-size:17px;color:rgba(255,255,255,.7);letter-spacing:-0.268px;">Pet Template *</span><span class="t" style="left:1589.30px;top:554.35px;font-size:22.5px;color:#fff;letter-spacing:-0.196px;">Orc Warrior</span>
<div style="position:absolute;left:2165.75px;top:542.55px;width:36.00px;height:36.00px;background:#4b95f0;border-radius:50%;box-shadow:0 4.5px 7.5px -1.5px rgba(0,0,0,.2),0 9px 15px 0 rgba(0,0,0,.14),0 1.5px 27px 0 rgba(0,0,0,.12);"></div><svg class="ic" style="left:2169.75px;top:546.55px;" width="28" height="28" viewBox="0 0 24 24"><path fill="#fff" d="M3 17.25V21h3.75L17.81 9.94l-3.75-3.75L3 17.25zM20.71 7.04c.39-.39.39-1.02 0-1.41l-2.34-2.34c-.39-.39-1.02-.39-1.41 0l-1.83 1.83 3.75 3.75 1.83-1.83z"/></svg>
<div style="position:absolute;left:2213.75px;top:542.55px;width:36.00px;height:36.00px;background:#4b95f0;border-radius:50%;box-shadow:0 4.5px 7.5px -1.5px rgba(0,0,0,.2),0 9px 15px 0 rgba(0,0,0,.14),0 1.5px 27px 0 rgba(0,0,0,.12);"></div><svg class="ic" style="left:2217.75px;top:546.55px;" width="28" height="28" viewBox="0 0 24 24"><path fill="#fff" d="M19 13h-6v6h-2v-6H5v-2h6V5h2v6h6v2z"/></svg>
<div style="position:absolute;left:2277.50px;top:532.30px;width:344.25px;height:56.50px;border:1px solid rgba(255,255,255,.3);border-radius:7px;box-sizing:border-box;"></div><div style="position:absolute;left:2285.00px;top:530.80px;width:100.80px;height:5.00px;background:#424242;"></div><span class="t" style="left:2294.80px;top:523.81px;font-size:17px;color:rgba(255,255,255,.7);letter-spacing:-0.362px;">Slots Profile</span><span class="t" style="left:2294.80px;top:554.35px;font-size:22.5px;color:#fff;letter-spacing:-0.451px;">Slot Profile 1</span>
<div style="position:absolute;left:2519.50px;top:542.55px;width:36.00px;height:36.00px;background:#4b95f0;border-radius:50%;box-shadow:0 4.5px 7.5px -1.5px rgba(0,0,0,.2),0 9px 15px 0 rgba(0,0,0,.14),0 1.5px 27px 0 rgba(0,0,0,.12);"></div><svg class="ic" style="left:2523.50px;top:546.55px;" width="28" height="28" viewBox="0 0 24 24"><path fill="#fff" d="M3 17.25V21h3.75L17.81 9.94l-3.75-3.75L3 17.25zM20.71 7.04c.39-.39.39-1.02 0-1.41l-2.34-2.34c-.39-.39-1.02-.39-1.41 0l-1.83 1.83 3.75 3.75 1.83-1.83z"/></svg>
<div style="position:absolute;left:2567.50px;top:542.55px;width:36.00px;height:36.00px;background:#4b95f0;border-radius:50%;box-shadow:0 4.5px 7.5px -1.5px rgba(0,0,0,.2),0 9px 15px 0 rgba(0,0,0,.14),0 1.5px 27px 0 rgba(0,0,0,.12);"></div><svg class="ic" style="left:2571.50px;top:546.55px;" width="28" height="28" viewBox="0 0 24 24"><path fill="#fff" d="M19 13h-6v6h-2v-6H5v-2h6V5h2v6h6v2z"/></svg>
<div style="position:absolute;left:1214.50px;top:611.80px;width:1221.50px;height:57.00px;border:1px solid rgba(255,255,255,.3);border-radius:7px;box-sizing:border-box;"></div><div style="position:absolute;left:1222.50px;top:610.30px;width:166.05px;height:5.00px;background:#424242;"></div><span class="t" style="left:1232.30px;top:604.31px;font-size:17px;color:rgba(255,255,255,.7);letter-spacing:-0.501px;">Level Up CoordEffect</span><span class="t" style="left:1232.30px;top:633.85px;font-size:22.5px;color:#fff;letter-spacing:-0.408px;">Assets/Resources/Content/CoordinatedEffects/Mobs/LevelUpEffect.prefab</span>
<div style="position:absolute;left:2381.50px;top:620.55px;width:36.00px;height:36.00px;background:#f1592f;border-radius:50%;box-shadow:0 4.5px 7.5px -1.5px rgba(0,0,0,.2),0 9px 15px 0 rgba(0,0,0,.14),0 1.5px 27px 0 rgba(0,0,0,.12);"></div><svg class="ic" style="left:2381.50px;top:620.55px;" width="36" height="36" viewBox="0 0 24 24"><path fill="#fff" d="M19 6.41L17.59 5 12 10.59 6.41 5 5 6.41 10.59 12 5 17.59 6.41 19 12 13.41 17.59 19 19 17.59 13.41 12z"/></svg>
<div style="position:absolute;left:2465.75px;top:612.30px;width:155.50px;height:52.50px;background:#424242;border-radius:6px;box-shadow:0 4.5px 1.5px -3px rgba(0,0,0,.2),0 3px 3px rgba(0,0,0,.14),0 1.5px 7.5px rgba(0,0,0,.12);"></div>
<span class="t sb" style="left:2488.30px;top:628.33px;font-size:21.94px;color:#fff;letter-spacing:-0.183px;">Choose file</span>
<div style="position:absolute;left:1201.50px;top:720.30px;width:1434.00px;height:179.90px;border:1px solid #e6e6e6;box-sizing:border-box;"></div>
<div style="position:absolute;left:1209.50px;top:718.80px;width:126.00px;height:5.00px;background:#424242;"></div>
<svg class="ic" style="left:1214.60px;top:694.70px;" width="36.8" height="36.8" viewBox="0 0 24 24"><path fill="#fff" d="M10 9h4V6h3l-5-5-5 5h3v3zm-1 1H6V7l-5 5 5 5v-3h3v-4zm14 2l-5-5v3h-3v4h3v3l5-5zm-9 3h-4v3H7l5 5 5-5h-3v-3z"/></svg>
<span class="t" style="left:1259.70px;top:704.40px;font-size:30px;color:#fff;letter-spacing:-0.444px;">Level</span>
<div style="position:absolute;left:2562.00px;top:718.80px;width:59.50px;height:5.00px;background:#424242;"></div>
<svg class="ic" style="left:2573.50px;top:703.30px;" width="36" height="36" viewBox="0 0 24 24"><path fill="#f4582e" d="M6 19c0 1.1.9 2 2 2h8c1.1 0 2-.9 2-2V7H6v12zM8 9h8v10H8V9zm7.5-5l-1-1h-5l-1 1H5v2h14V4z"/></svg>
<div style="position:absolute;left:1214.50px;top:745.30px;width:133.50px;height:56.50px;border:1px solid rgba(255,255,255,.3);border-radius:7px;box-sizing:border-box;"></div><div style="position:absolute;left:1222.75px;top:743.80px;width:62.80px;height:5.00px;background:#424242;"></div><span class="t" style="left:1232.55px;top:736.81px;font-size:17px;color:rgba(255,255,255,.7);letter-spacing:-0.569px;">Level *</span><span class="t" style="left:1232.55px;top:767.35px;font-size:22.5px;color:#fff;">2</span>
<div style="position:absolute;left:1357.50px;top:745.30px;width:204.25px;height:56.50px;border:1px solid rgba(255,255,255,.3);border-radius:7px;box-sizing:border-box;"></div><div style="position:absolute;left:1365.75px;top:743.80px;width:121.80px;height:5.00px;background:#424242;"></div><span class="t" style="left:1375.55px;top:736.81px;font-size:17px;color:rgba(255,255,255,.7);letter-spacing:-0.525px;">Exp Required *</span><span class="t" style="left:1375.55px;top:767.35px;font-size:22.5px;color:#fff;">300</span>
<div style="position:absolute;left:1571.25px;top:745.30px;width:696.75px;height:56.50px;border:1px solid rgba(255,255,255,.3);border-radius:7px;box-sizing:border-box;"></div><div style="position:absolute;left:1579.50px;top:743.80px;width:121.30px;height:5.00px;background:#424242;"></div><span class="t" style="left:1589.30px;top:736.81px;font-size:17px;color:rgba(255,255,255,.7);letter-spacing:-0.268px;">Pet Template *</span><span class="t" style="left:1589.30px;top:767.35px;font-size:22.5px;color:#fff;letter-spacing:-0.196px;">Orc Warrior</span>
<div style="position:absolute;left:2165.75px;top:755.55px;width:36.00px;height:36.00px;background:#4b95f0;border-radius:50%;box-shadow:0 4.5px 7.5px -1.5px rgba(0,0,0,.2),0 9px 15px 0 rgba(0,0,0,.14),0 1.5px 27px 0 rgba(0,0,0,.12);"></div><svg class="ic" style="left:2169.75px;top:759.55px;" width="28" height="28" viewBox="0 0 24 24"><path fill="#fff" d="M3 17.25V21h3.75L17.81 9.94l-3.75-3.75L3 17.25zM20.71 7.04c.39-.39.39-1.02 0-1.41l-2.34-2.34c-.39-.39-1.02-.39-1.41 0l-1.83 1.83 3.75 3.75 1.83-1.83z"/></svg>
<div style="position:absolute;left:2213.75px;top:755.55px;width:36.00px;height:36.00px;background:#4b95f0;border-radius:50%;box-shadow:0 4.5px 7.5px -1.5px rgba(0,0,0,.2),0 9px 15px 0 rgba(0,0,0,.14),0 1.5px 27px 0 rgba(0,0,0,.12);"></div><svg class="ic" style="left:2217.75px;top:759.55px;" width="28" height="28" viewBox="0 0 24 24"><path fill="#fff" d="M19 13h-6v6h-2v-6H5v-2h6V5h2v6h6v2z"/></svg>
<div style="position:absolute;left:2277.50px;top:745.30px;width:344.25px;height:56.50px;border:1px solid rgba(255,255,255,.3);border-radius:7px;box-sizing:border-box;"></div><div style="position:absolute;left:2285.00px;top:743.80px;width:100.80px;height:5.00px;background:#424242;"></div><span class="t" style="left:2294.80px;top:736.81px;font-size:17px;color:rgba(255,255,255,.7);letter-spacing:-0.362px;">Slots Profile</span><span class="t" style="left:2294.80px;top:767.35px;font-size:22.5px;color:#fff;letter-spacing:-0.451px;">Slot Profile 2</span>
<div style="position:absolute;left:2519.50px;top:755.55px;width:36.00px;height:36.00px;background:#4b95f0;border-radius:50%;box-shadow:0 4.5px 7.5px -1.5px rgba(0,0,0,.2),0 9px 15px 0 rgba(0,0,0,.14),0 1.5px 27px 0 rgba(0,0,0,.12);"></div><svg class="ic" style="left:2523.50px;top:759.55px;" width="28" height="28" viewBox="0 0 24 24"><path fill="#fff" d="M3 17.25V21h3.75L17.81 9.94l-3.75-3.75L3 17.25zM20.71 7.04c.39-.39.39-1.02 0-1.41l-2.34-2.34c-.39-.39-1.02-.39-1.41 0l-1.83 1.83 3.75 3.75 1.83-1.83z"/></svg>
<div style="position:absolute;left:2567.50px;top:755.55px;width:36.00px;height:36.00px;background:#4b95f0;border-radius:50%;box-shadow:0 4.5px 7.5px -1.5px rgba(0,0,0,.2),0 9px 15px 0 rgba(0,0,0,.14),0 1.5px 27px 0 rgba(0,0,0,.12);"></div><svg class="ic" style="left:2571.50px;top:759.55px;" width="28" height="28" viewBox="0 0 24 24"><path fill="#fff" d="M19 13h-6v6h-2v-6H5v-2h6V5h2v6h6v2z"/></svg>
<div style="position:absolute;left:1214.50px;top:824.80px;width:1221.50px;height:57.00px;border:1px solid rgba(255,255,255,.3);border-radius:7px;box-sizing:border-box;"></div><div style="position:absolute;left:1222.50px;top:823.30px;width:166.05px;height:5.00px;background:#424242;"></div><span class="t" style="left:1232.30px;top:817.31px;font-size:17px;color:rgba(255,255,255,.7);letter-spacing:-0.501px;">Level Up CoordEffect</span><span class="t" style="left:1232.30px;top:846.85px;font-size:22.5px;color:#fff;letter-spacing:-0.408px;">Assets/Resources/Content/CoordinatedEffects/Mobs/LevelUpEffect.prefab</span>
<div style="position:absolute;left:2381.50px;top:833.55px;width:36.00px;height:36.00px;background:#f1592f;border-radius:50%;box-shadow:0 4.5px 7.5px -1.5px rgba(0,0,0,.2),0 9px 15px 0 rgba(0,0,0,.14),0 1.5px 27px 0 rgba(0,0,0,.12);"></div><svg class="ic" style="left:2381.50px;top:833.55px;" width="36" height="36" viewBox="0 0 24 24"><path fill="#fff" d="M19 6.41L17.59 5 12 10.59 6.41 5 5 6.41 10.59 12 5 17.59 6.41 19 12 13.41 17.59 19 19 17.59 13.41 12z"/></svg>
<div style="position:absolute;left:2465.75px;top:825.30px;width:155.50px;height:52.50px;background:#424242;border-radius:6px;box-shadow:0 4.5px 1.5px -3px rgba(0,0,0,.2),0 3px 3px rgba(0,0,0,.14),0 1.5px 7.5px rgba(0,0,0,.12);"></div>
<span class="t sb" style="left:2488.30px;top:841.33px;font-size:21.94px;color:#fff;letter-spacing:-0.183px;">Choose file</span>
<div style="position:absolute;left:1201.50px;top:933.30px;width:1434.00px;height:179.90px;border:1px solid #e6e6e6;box-sizing:border-box;"></div>
<div style="position:absolute;left:1209.50px;top:931.80px;width:126.00px;height:5.00px;background:#424242;"></div>
<svg class="ic" style="left:1214.60px;top:907.70px;" width="36.8" height="36.8" viewBox="0 0 24 24"><path fill="#fff" d="M10 9h4V6h3l-5-5-5 5h3v3zm-1 1H6V7l-5 5 5 5v-3h3v-4zm14 2l-5-5v3h-3v4h3v3l5-5zm-9 3h-4v3H7l5 5 5-5h-3v-3z"/></svg>
<span class="t" style="left:1259.70px;top:917.40px;font-size:30px;color:#fff;letter-spacing:-0.444px;">Level</span>
<div style="position:absolute;left:2562.00px;top:931.80px;width:59.50px;height:5.00px;background:#424242;"></div>
<svg class="ic" style="left:2573.50px;top:916.30px;" width="36" height="36" viewBox="0 0 24 24"><path fill="#f4582e" d="M6 19c0 1.1.9 2 2 2h8c1.1 0 2-.9 2-2V7H6v12zM8 9h8v10H8V9zm7.5-5l-1-1h-5l-1 1H5v2h14V4z"/></svg>
<div style="position:absolute;left:1214.50px;top:958.30px;width:133.50px;height:56.50px;border:1px solid rgba(255,255,255,.3);border-radius:7px;box-sizing:border-box;"></div><div style="position:absolute;left:1222.75px;top:956.80px;width:62.80px;height:5.00px;background:#424242;"></div><span class="t" style="left:1232.55px;top:949.81px;font-size:17px;color:rgba(255,255,255,.7);letter-spacing:-0.569px;">Level *</span><span class="t" style="left:1232.55px;top:980.35px;font-size:22.5px;color:#fff;">3</span>
<div style="position:absolute;left:1357.50px;top:958.30px;width:204.25px;height:56.50px;border:1px solid rgba(255,255,255,.3);border-radius:7px;box-sizing:border-box;"></div><div style="position:absolute;left:1365.75px;top:956.80px;width:121.80px;height:5.00px;background:#424242;"></div><span class="t" style="left:1375.55px;top:949.81px;font-size:17px;color:rgba(255,255,255,.7);letter-spacing:-0.525px;">Exp Required *</span><span class="t" style="left:1375.55px;top:980.35px;font-size:22.5px;color:#fff;">300</span>
<div style="position:absolute;left:1571.25px;top:958.30px;width:696.75px;height:56.50px;border:1px solid rgba(255,255,255,.3);border-radius:7px;box-sizing:border-box;"></div><div style="position:absolute;left:1579.50px;top:956.80px;width:121.30px;height:5.00px;background:#424242;"></div><span class="t" style="left:1589.30px;top:949.81px;font-size:17px;color:rgba(255,255,255,.7);letter-spacing:-0.268px;">Pet Template *</span><span class="t" style="left:1589.30px;top:980.35px;font-size:22.5px;color:#fff;letter-spacing:-0.196px;">Orc Warrior</span>
<div style="position:absolute;left:2165.75px;top:968.55px;width:36.00px;height:36.00px;background:#4b95f0;border-radius:50%;box-shadow:0 4.5px 7.5px -1.5px rgba(0,0,0,.2),0 9px 15px 0 rgba(0,0,0,.14),0 1.5px 27px 0 rgba(0,0,0,.12);"></div><svg class="ic" style="left:2169.75px;top:972.55px;" width="28" height="28" viewBox="0 0 24 24"><path fill="#fff" d="M3 17.25V21h3.75L17.81 9.94l-3.75-3.75L3 17.25zM20.71 7.04c.39-.39.39-1.02 0-1.41l-2.34-2.34c-.39-.39-1.02-.39-1.41 0l-1.83 1.83 3.75 3.75 1.83-1.83z"/></svg>
<div style="position:absolute;left:2213.75px;top:968.55px;width:36.00px;height:36.00px;background:#4b95f0;border-radius:50%;box-shadow:0 4.5px 7.5px -1.5px rgba(0,0,0,.2),0 9px 15px 0 rgba(0,0,0,.14),0 1.5px 27px 0 rgba(0,0,0,.12);"></div><svg class="ic" style="left:2217.75px;top:972.55px;" width="28" height="28" viewBox="0 0 24 24"><path fill="#fff" d="M19 13h-6v6h-2v-6H5v-2h6V5h2v6h6v2z"/></svg>
<div style="position:absolute;left:2277.50px;top:958.30px;width:344.25px;height:56.50px;border:1px solid rgba(255,255,255,.3);border-radius:7px;box-sizing:border-box;"></div><div style="position:absolute;left:2285.00px;top:956.80px;width:100.80px;height:5.00px;background:#424242;"></div><span class="t" style="left:2294.80px;top:949.81px;font-size:17px;color:rgba(255,255,255,.7);letter-spacing:-0.362px;">Slots Profile</span><span class="t" style="left:2294.80px;top:980.35px;font-size:22.5px;color:#fff;letter-spacing:-0.451px;">Slot Profile 3</span>
<div style="position:absolute;left:2519.50px;top:968.55px;width:36.00px;height:36.00px;background:#4b95f0;border-radius:50%;box-shadow:0 4.5px 7.5px -1.5px rgba(0,0,0,.2),0 9px 15px 0 rgba(0,0,0,.14),0 1.5px 27px 0 rgba(0,0,0,.12);"></div><svg class="ic" style="left:2523.50px;top:972.55px;" width="28" height="28" viewBox="0 0 24 24"><path fill="#fff" d="M3 17.25V21h3.75L17.81 9.94l-3.75-3.75L3 17.25zM20.71 7.04c.39-.39.39-1.02 0-1.41l-2.34-2.34c-.39-.39-1.02-.39-1.41 0l-1.83 1.83 3.75 3.75 1.83-1.83z"/></svg>
<div style="position:absolute;left:2567.50px;top:968.55px;width:36.00px;height:36.00px;background:#4b95f0;border-radius:50%;box-shadow:0 4.5px 7.5px -1.5px rgba(0,0,0,.2),0 9px 15px 0 rgba(0,0,0,.14),0 1.5px 27px 0 rgba(0,0,0,.12);"></div><svg class="ic" style="left:2571.50px;top:972.55px;" width="28" height="28" viewBox="0 0 24 24"><path fill="#fff" d="M19 13h-6v6h-2v-6H5v-2h6V5h2v6h6v2z"/></svg>
<div style="position:absolute;left:1214.50px;top:1037.80px;width:1221.50px;height:57.00px;border:1px solid rgba(255,255,255,.3);border-radius:7px;box-sizing:border-box;"></div><div style="position:absolute;left:1222.50px;top:1036.30px;width:166.05px;height:5.00px;background:#424242;"></div><span class="t" style="left:1232.30px;top:1030.31px;font-size:17px;color:rgba(255,255,255,.7);letter-spacing:-0.501px;">Level Up CoordEffect</span><span class="t" style="left:1232.30px;top:1059.85px;font-size:22.5px;color:#fff;letter-spacing:-0.408px;">Assets/Resources/Content/CoordinatedEffects/Mobs/LevelUpEffect.prefab</span>
<div style="position:absolute;left:2381.50px;top:1046.55px;width:36.00px;height:36.00px;background:#f1592f;border-radius:50%;box-shadow:0 4.5px 7.5px -1.5px rgba(0,0,0,.2),0 9px 15px 0 rgba(0,0,0,.14),0 1.5px 27px 0 rgba(0,0,0,.12);"></div><svg class="ic" style="left:2381.50px;top:1046.55px;" width="36" height="36" viewBox="0 0 24 24"><path fill="#fff" d="M19 6.41L17.59 5 12 10.59 6.41 5 5 6.41 10.59 12 5 17.59 6.41 19 12 13.41 17.59 19 19 17.59 13.41 12z"/></svg>
<div style="position:absolute;left:2465.75px;top:1038.30px;width:155.50px;height:52.50px;background:#424242;border-radius:6px;box-shadow:0 4.5px 1.5px -3px rgba(0,0,0,.2),0 3px 3px rgba(0,0,0,.14),0 1.5px 7.5px rgba(0,0,0,.12);"></div>
<span class="t sb" style="left:2488.30px;top:1054.33px;font-size:21.94px;color:#fff;letter-spacing:-0.183px;">Choose file</span>
<div style="position:absolute;left:1201.50px;top:1146.30px;width:1434.00px;height:179.90px;border:1px solid #e6e6e6;box-sizing:border-box;"></div>
<div style="position:absolute;left:1209.50px;top:1144.80px;width:126.00px;height:5.00px;background:#424242;"></div>
<svg class="ic" style="left:1214.60px;top:1120.70px;" width="36.8" height="36.8" viewBox="0 0 24 24"><path fill="#fff" d="M10 9h4V6h3l-5-5-5 5h3v3zm-1 1H6V7l-5 5 5 5v-3h3v-4zm14 2l-5-5v3h-3v4h3v3l5-5zm-9 3h-4v3H7l5 5 5-5h-3v-3z"/></svg>
<span class="t" style="left:1259.70px;top:1130.40px;font-size:30px;color:#fff;letter-spacing:-0.444px;">Level</span>
<div style="position:absolute;left:2562.00px;top:1144.80px;width:59.50px;height:5.00px;background:#424242;"></div>
<svg class="ic" style="left:2573.50px;top:1129.30px;" width="36" height="36" viewBox="0 0 24 24"><path fill="#f4582e" d="M6 19c0 1.1.9 2 2 2h8c1.1 0 2-.9 2-2V7H6v12zM8 9h8v10H8V9zm7.5-5l-1-1h-5l-1 1H5v2h14V4z"/></svg>
<div style="position:absolute;left:1214.50px;top:1171.30px;width:133.50px;height:56.50px;border:1px solid rgba(255,255,255,.3);border-radius:7px;box-sizing:border-box;"></div><div style="position:absolute;left:1222.75px;top:1169.80px;width:62.80px;height:5.00px;background:#424242;"></div><span class="t" style="left:1232.55px;top:1162.81px;font-size:17px;color:rgba(255,255,255,.7);letter-spacing:-0.569px;">Level *</span><span class="t" style="left:1232.55px;top:1193.35px;font-size:22.5px;color:#fff;">4</span>
<div style="position:absolute;left:1357.50px;top:1171.30px;width:204.25px;height:56.50px;border:1px solid rgba(255,255,255,.3);border-radius:7px;box-sizing:border-box;"></div><div style="position:absolute;left:1365.75px;top:1169.80px;width:121.80px;height:5.00px;background:#424242;"></div><span class="t" style="left:1375.55px;top:1162.81px;font-size:17px;color:rgba(255,255,255,.7);letter-spacing:-0.525px;">Exp Required *</span><span class="t" style="left:1375.55px;top:1193.35px;font-size:22.5px;color:#fff;">300</span>
<div style="position:absolute;left:1571.25px;top:1171.30px;width:696.75px;height:56.50px;border:1px solid rgba(255,255,255,.3);border-radius:7px;box-sizing:border-box;"></div><div style="position:absolute;left:1579.50px;top:1169.80px;width:121.30px;height:5.00px;background:#424242;"></div><span class="t" style="left:1589.30px;top:1162.81px;font-size:17px;color:rgba(255,255,255,.7);letter-spacing:-0.268px;">Pet Template *</span><span class="t" style="left:1589.30px;top:1193.35px;font-size:22.5px;color:#fff;letter-spacing:-0.196px;">Orc Warrior</span>
<div style="position:absolute;left:2165.75px;top:1181.55px;width:36.00px;height:36.00px;background:#4b95f0;border-radius:50%;box-shadow:0 4.5px 7.5px -1.5px rgba(0,0,0,.2),0 9px 15px 0 rgba(0,0,0,.14),0 1.5px 27px 0 rgba(0,0,0,.12);"></div><svg class="ic" style="left:2169.75px;top:1185.55px;" width="28" height="28" viewBox="0 0 24 24"><path fill="#fff" d="M3 17.25V21h3.75L17.81 9.94l-3.75-3.75L3 17.25zM20.71 7.04c.39-.39.39-1.02 0-1.41l-2.34-2.34c-.39-.39-1.02-.39-1.41 0l-1.83 1.83 3.75 3.75 1.83-1.83z"/></svg>
<div style="position:absolute;left:2213.75px;top:1181.55px;width:36.00px;height:36.00px;background:#4b95f0;border-radius:50%;box-shadow:0 4.5px 7.5px -1.5px rgba(0,0,0,.2),0 9px 15px 0 rgba(0,0,0,.14),0 1.5px 27px 0 rgba(0,0,0,.12);"></div><svg class="ic" style="left:2217.75px;top:1185.55px;" width="28" height="28" viewBox="0 0 24 24"><path fill="#fff" d="M19 13h-6v6h-2v-6H5v-2h6V5h2v6h6v2z"/></svg>
<div style="position:absolute;left:2277.50px;top:1171.30px;width:344.25px;height:56.50px;border:1px solid rgba(255,255,255,.3);border-radius:7px;box-sizing:border-box;"></div><div style="position:absolute;left:2285.00px;top:1169.80px;width:100.80px;height:5.00px;background:#424242;"></div><span class="t" style="left:2294.80px;top:1162.81px;font-size:17px;color:rgba(255,255,255,.7);letter-spacing:-0.362px;">Slots Profile</span><span class="t" style="left:2294.80px;top:1193.35px;font-size:22.5px;color:#fff;letter-spacing:-0.451px;">Slot Profile 4</span>
<div style="position:absolute;left:2519.50px;top:1181.55px;width:36.00px;height:36.00px;background:#4b95f0;border-radius:50%;box-shadow:0 4.5px 7.5px -1.5px rgba(0,0,0,.2),0 9px 15px 0 rgba(0,0,0,.14),0 1.5px 27px 0 rgba(0,0,0,.12);"></div><svg class="ic" style="left:2523.50px;top:1185.55px;" width="28" height="28" viewBox="0 0 24 24"><path fill="#fff" d="M3 17.25V21h3.75L17.81 9.94l-3.75-3.75L3 17.25zM20.71 7.04c.39-.39.39-1.02 0-1.41l-2.34-2.34c-.39-.39-1.02-.39-1.41 0l-1.83 1.83 3.75 3.75 1.83-1.83z"/></svg>
<div style="position:absolute;left:2567.50px;top:1181.55px;width:36.00px;height:36.00px;background:#4b95f0;border-radius:50%;box-shadow:0 4.5px 7.5px -1.5px rgba(0,0,0,.2),0 9px 15px 0 rgba(0,0,0,.14),0 1.5px 27px 0 rgba(0,0,0,.12);"></div><svg class="ic" style="left:2571.50px;top:1185.55px;" width="28" height="28" viewBox="0 0 24 24"><path fill="#fff" d="M19 13h-6v6h-2v-6H5v-2h6V5h2v6h6v2z"/></svg>
<div style="position:absolute;left:1214.50px;top:1250.80px;width:1221.50px;height:57.00px;border:1px solid rgba(255,255,255,.3);border-radius:7px;box-sizing:border-box;"></div><div style="position:absolute;left:1222.50px;top:1249.30px;width:166.05px;height:5.00px;background:#424242;"></div><span class="t" style="left:1232.30px;top:1243.31px;font-size:17px;color:rgba(255,255,255,.7);letter-spacing:-0.501px;">Level Up CoordEffect</span><span class="t" style="left:1232.30px;top:1272.85px;font-size:22.5px;color:#fff;letter-spacing:-0.408px;">Assets/Resources/Content/CoordinatedEffects/Mobs/LevelUpEffect.prefab</span>
<div style="position:absolute;left:2381.50px;top:1259.55px;width:36.00px;height:36.00px;background:#f1592f;border-radius:50%;box-shadow:0 4.5px 7.5px -1.5px rgba(0,0,0,.2),0 9px 15px 0 rgba(0,0,0,.14),0 1.5px 27px 0 rgba(0,0,0,.12);"></div><svg class="ic" style="left:2381.50px;top:1259.55px;" width="36" height="36" viewBox="0 0 24 24"><path fill="#fff" d="M19 6.41L17.59 5 12 10.59 6.41 5 5 6.41 10.59 12 5 17.59 6.41 19 12 13.41 17.59 19 19 17.59 13.41 12z"/></svg>
<div style="position:absolute;left:2465.75px;top:1251.30px;width:155.50px;height:52.50px;background:#424242;border-radius:6px;box-shadow:0 4.5px 1.5px -3px rgba(0,0,0,.2),0 3px 3px rgba(0,0,0,.14),0 1.5px 7.5px rgba(0,0,0,.12);"></div>
<span class="t sb" style="left:2488.30px;top:1267.33px;font-size:21.94px;color:#fff;letter-spacing:-0.183px;">Choose file</span>
<div style="position:absolute;left:1201.50px;top:1359.30px;width:1434.00px;height:179.90px;border:1px solid #e6e6e6;box-sizing:border-box;"></div>
<div style="position:absolute;left:1209.50px;top:1357.80px;width:126.00px;height:5.00px;background:#424242;"></div>
<svg class="ic" style="left:1214.60px;top:1333.70px;" width="36.8" height="36.8" viewBox="0 0 24 24"><path fill="#fff" d="M10 9h4V6h3l-5-5-5 5h3v3zm-1 1H6V7l-5 5 5 5v-3h3v-4zm14 2l-5-5v3h-3v4h3v3l5-5zm-9 3h-4v3H7l5 5 5-5h-3v-3z"/></svg>
<span class="t" style="left:1259.70px;top:1343.40px;font-size:30px;color:#fff;letter-spacing:-0.444px;">Level</span>
<div style="position:absolute;left:2562.00px;top:1357.80px;width:59.50px;height:5.00px;background:#424242;"></div>
<svg class="ic" style="left:2573.50px;top:1342.30px;" width="36" height="36" viewBox="0 0 24 24"><path fill="#f4582e" d="M6 19c0 1.1.9 2 2 2h8c1.1 0 2-.9 2-2V7H6v12zM8 9h8v10H8V9zm7.5-5l-1-1h-5l-1 1H5v2h14V4z"/></svg>
<div style="position:absolute;left:1214.50px;top:1384.30px;width:133.50px;height:56.50px;border:1px solid rgba(255,255,255,.3);border-radius:7px;box-sizing:border-box;"></div><div style="position:absolute;left:1222.75px;top:1382.80px;width:62.80px;height:5.00px;background:#424242;"></div><span class="t" style="left:1232.55px;top:1375.81px;font-size:17px;color:rgba(255,255,255,.7);letter-spacing:-0.569px;">Level *</span><span class="t" style="left:1232.55px;top:1406.35px;font-size:22.5px;color:#fff;">5</span>
<div style="position:absolute;left:1357.50px;top:1384.30px;width:204.25px;height:56.50px;border:1px solid rgba(255,255,255,.3);border-radius:7px;box-sizing:border-box;"></div><div style="position:absolute;left:1365.75px;top:1382.80px;width:121.80px;height:5.00px;background:#424242;"></div><span class="t" style="left:1375.55px;top:1375.81px;font-size:17px;color:rgba(255,255,255,.7);letter-spacing:-0.525px;">Exp Required *</span><span class="t" style="left:1375.55px;top:1406.35px;font-size:22.5px;color:#fff;">10000</span>
<div style="position:absolute;left:1571.25px;top:1384.30px;width:696.75px;height:56.50px;border:1px solid rgba(255,255,255,.3);border-radius:7px;box-sizing:border-box;"></div><div style="position:absolute;left:1579.50px;top:1382.80px;width:121.30px;height:5.00px;background:#424242;"></div><span class="t" style="left:1589.30px;top:1375.81px;font-size:17px;color:rgba(255,255,255,.7);letter-spacing:-0.268px;">Pet Template *</span><span class="t" style="left:1589.30px;top:1406.35px;font-size:22.5px;color:#fff;letter-spacing:-0.196px;">Orc Warrior</span>
<div style="position:absolute;left:2165.75px;top:1394.55px;width:36.00px;height:36.00px;background:#4b95f0;border-radius:50%;box-shadow:0 4.5px 7.5px -1.5px rgba(0,0,0,.2),0 9px 15px 0 rgba(0,0,0,.14),0 1.5px 27px 0 rgba(0,0,0,.12);"></div><svg class="ic" style="left:2169.75px;top:1398.55px;" width="28" height="28" viewBox="0 0 24 24"><path fill="#fff" d="M3 17.25V21h3.75L17.81 9.94l-3.75-3.75L3 17.25zM20.71 7.04c.39-.39.39-1.02 0-1.41l-2.34-2.34c-.39-.39-1.02-.39-1.41 0l-1.83 1.83 3.75 3.75 1.83-1.83z"/></svg>
<div style="position:absolute;left:2213.75px;top:1394.55px;width:36.00px;height:36.00px;background:#4b95f0;border-radius:50%;box-shadow:0 4.5px 7.5px -1.5px rgba(0,0,0,.2),0 9px 15px 0 rgba(0,0,0,.14),0 1.5px 27px 0 rgba(0,0,0,.12);"></div><svg class="ic" style="left:2217.75px;top:1398.55px;" width="28" height="28" viewBox="0 0 24 24"><path fill="#fff" d="M19 13h-6v6h-2v-6H5v-2h6V5h2v6h6v2z"/></svg>
<div style="position:absolute;left:2277.50px;top:1384.30px;width:344.25px;height:56.50px;border:1px solid rgba(255,255,255,.3);border-radius:7px;box-sizing:border-box;"></div><div style="position:absolute;left:2285.00px;top:1382.80px;width:100.80px;height:5.00px;background:#424242;"></div><span class="t" style="left:2294.80px;top:1375.81px;font-size:17px;color:rgba(255,255,255,.7);letter-spacing:-0.362px;">Slots Profile</span><span class="t" style="left:2294.80px;top:1406.35px;font-size:22.5px;color:#fff;letter-spacing:-0.451px;">Slot Profile 5</span>
<div style="position:absolute;left:2519.50px;top:1394.55px;width:36.00px;height:36.00px;background:#4b95f0;border-radius:50%;box-shadow:0 4.5px 7.5px -1.5px rgba(0,0,0,.2),0 9px 15px 0 rgba(0,0,0,.14),0 1.5px 27px 0 rgba(0,0,0,.12);"></div><svg class="ic" style="left:2523.50px;top:1398.55px;" width="28" height="28" viewBox="0 0 24 24"><path fill="#fff" d="M3 17.25V21h3.75L17.81 9.94l-3.75-3.75L3 17.25zM20.71 7.04c.39-.39.39-1.02 0-1.41l-2.34-2.34c-.39-.39-1.02-.39-1.41 0l-1.83 1.83 3.75 3.75 1.83-1.83z"/></svg>
<div style="position:absolute;left:2567.50px;top:1394.55px;width:36.00px;height:36.00px;background:#4b95f0;border-radius:50%;box-shadow:0 4.5px 7.5px -1.5px rgba(0,0,0,.2),0 9px 15px 0 rgba(0,0,0,.14),0 1.5px 27px 0 rgba(0,0,0,.12);"></div><svg class="ic" style="left:2571.50px;top:1398.55px;" width="28" height="28" viewBox="0 0 24 24"><path fill="#fff" d="M19 13h-6v6h-2v-6H5v-2h6V5h2v6h6v2z"/></svg>
<div style="position:absolute;left:1214.50px;top:1463.80px;width:1221.50px;height:57.00px;border:1px solid rgba(255,255,255,.3);border-radius:7px;box-sizing:border-box;"></div><div style="position:absolute;left:1222.50px;top:1462.30px;width:166.05px;height:5.00px;background:#424242;"></div><span class="t" style="left:1232.30px;top:1456.31px;font-size:17px;color:rgba(255,255,255,.7);letter-spacing:-0.501px;">Level Up CoordEffect</span><span class="t" style="left:1232.30px;top:1485.85px;font-size:22.5px;color:#fff;letter-spacing:-0.408px;">Assets/Resources/Content/CoordinatedEffects/Mobs/LevelUpEffect.prefab</span>
<div style="position:absolute;left:2381.50px;top:1472.55px;width:36.00px;height:36.00px;background:#f1592f;border-radius:50%;box-shadow:0 4.5px 7.5px -1.5px rgba(0,0,0,.2),0 9px 15px 0 rgba(0,0,0,.14),0 1.5px 27px 0 rgba(0,0,0,.12);"></div><svg class="ic" style="left:2381.50px;top:1472.55px;" width="36" height="36" viewBox="0 0 24 24"><path fill="#fff" d="M19 6.41L17.59 5 12 10.59 6.41 5 5 6.41 10.59 12 5 17.59 6.41 19 12 13.41 17.59 19 19 17.59 13.41 12z"/></svg>
<div style="position:absolute;left:2465.75px;top:1464.30px;width:155.50px;height:52.50px;background:#424242;border-radius:6px;box-shadow:0 4.5px 1.5px -3px rgba(0,0,0,.2),0 3px 3px rgba(0,0,0,.14),0 1.5px 7.5px rgba(0,0,0,.12);"></div>
<span class="t sb" style="left:2488.30px;top:1480.33px;font-size:21.94px;color:#fff;letter-spacing:-0.183px;">Choose file</span>
<div style="position:absolute;left:1202.00px;top:1551.00px;width:180.00px;height:54.00px;background:#4b95f0;border-radius:6px;box-shadow:0 4.5px 1.5px -3px rgba(0,0,0,.2),0 3px 3px rgba(0,0,0,.14),0 1.5px 7.5px rgba(0,0,0,.12);"></div><span class="t sb" style="left:1243.30px;top:1567.53px;font-size:21.94px;color:#fff;letter-spacing:-0.065px;">Add Level</span>
<div style="position:absolute;left:1184.00px;top:1646.80px;width:1469.80px;height:1.40px;background:#dedede;"></div>
<div style="position:absolute;left:2193.00px;top:1672.00px;width:120.75px;height:53.75px;background:#4b95f0;border-radius:6px;box-shadow:0 4.5px 1.5px -3px rgba(0,0,0,.2),0 3px 3px rgba(0,0,0,.14),0 1.5px 7.5px rgba(0,0,0,.12);"></div><span class="t sb" style="left:2216.80px;top:1688.53px;font-size:21.94px;color:#fff;letter-spacing:0.250px;">Update</span>
<div style="position:absolute;left:2325.75px;top:1672.00px;width:176.00px;height:53.75px;background:#4b95f0;border-radius:6px;box-shadow:0 4.5px 1.5px -3px rgba(0,0,0,.2),0 3px 3px rgba(0,0,0,.14),0 1.5px 7.5px rgba(0,0,0,.12);"></div><span class="t sb" style="left:2349.30px;top:1688.53px;font-size:21.94px;color:#fff;letter-spacing:-0.160px;">Save as New</span>
<span class="t sb" style="left:2538.55px;top:1688.53px;font-size:21.94px;color:#fff;letter-spacing:-0.424px;">Cancel</span>
</section>
<div class="backdrop"></div>
<section id="slots-dialog">
<div style="position:absolute;left:1559.30px;top:797.00px;width:719.70px;height:447.50px;background:#424242;border-radius:6px;box-shadow:0 16px 22px -10px rgba(0,0,0,.2),0 36px 57px 4px rgba(0,0,0,.14),0 13px 69px 12px rgba(0,0,0,.12);"></div>
<div style="position:absolute;left:1559.30px;top:797.00px;width:719.70px;height:96.00px;background:#657c8a;border-radius:6px 6px 0 0;"></div>
<span class="t mb" style="left:1582.55px;top:830.21px;font-size:30px;color:#fff;letter-spacing:0.643px;">Update Slots Profile</span>
<div style="position:absolute;left:1887.50px;top:831.50px;width:54.00px;height:21.00px;background:rgba(255,255,255,.5);border-radius:10.5px;"></div><div style="position:absolute;left:1887.50px;top:827.00px;width:30.00px;height:30.00px;background:#bdbdbd;border-radius:50%;box-shadow:0 3px 1.5px -1.5px rgba(0,0,0,.2),0 1.5px 1.5px rgba(0,0,0,.14),0 1.5px 4.5px rgba(0,0,0,.12);"></div>
<span class="t sb" style="left:1953.55px;top:831.53px;font-size:21.94px;color:#fff;letter-spacing:0.915px;">Show popover</span>
<svg class="ic" style="left:2138.30px;top:829.50px;" width="37" height="37" viewBox="0 0 24 24"><path fill="#fff" d="M11 18h2v-2h-2v2zm1-16C6.48 2 2 6.48 2 12s4.48 10 10 10 10-4.48 10-10S17.52 2 12 2zm0 18c-4.41 0-8-3.59-8-8s3.59-8 8-8 8 3.59 8 8-3.59 8-8 8zm0-14c-2.21 0-4 1.79-4 4h2c0-1.1.9-2 2-2s2 .9 2 2c0 2-3 1.75-3 5h2c0-2.25 3-2.5 3-5 0-2.21-1.79-4-4-4z"/></svg>
<svg class="ic" style="left:2206.50px;top:829.50px;" width="37" height="37" viewBox="0 0 24 24"><path fill="#fff" d="M19 6.41L17.59 5 12 10.59 6.41 5 5 6.41 10.59 12 5 17.59 6.41 19 12 13.41 17.59 19 19 17.59 13.41 12z"/></svg>
<div style="position:absolute;left:1576.50px;top:916.75px;width:684.00px;height:57.00px;border:1px solid rgba(255,255,255,.3);border-radius:7px;box-sizing:border-box;"></div><div style="position:absolute;left:1584.50px;top:915.25px;width:69.30px;height:5.00px;background:#424242;"></div><span class="t" style="left:1594.30px;top:909.26px;font-size:17px;color:rgba(255,255,255,.7);letter-spacing:-0.365px;">Name *</span><span class="t" style="left:1594.30px;top:938.80px;font-size:22.5px;color:#fff;letter-spacing:-0.451px;">Slot Profile 1</span>
<div style="position:absolute;left:1576.50px;top:996.00px;width:684.00px;height:110.75px;border:1px solid rgba(255,255,255,.3);border-radius:7px;box-sizing:border-box;"></div><div style="position:absolute;left:1584.50px;top:994.50px;width:61.80px;height:5.00px;background:#424242;"></div><span class="t" style="left:1594.30px;top:988.51px;font-size:17px;color:rgba(255,255,255,.7);letter-spacing:-0.305px;">Slots *</span>
<div style="position:absolute;left:1595.00px;top:1018.75px;width:215.75px;height:48.00px;background:#616161;border-radius:24px;"></div><span class="t" style="left:1612.55px;top:1031.55px;font-size:22.5px;color:#fff;letter-spacing:-0.174px;">Main Hand</span><svg class="ic" style="left:1732.75px;top:1029.00px;" width="27" height="27" viewBox="0 0 24 24"><path fill="#fff" d="M3 17.25V21h3.75L17.81 9.94l-3.75-3.75L3 17.25zM20.71 7.04c.39-.39.39-1.02 0-1.41l-2.34-2.34c-.39-.39-1.02-.39-1.41 0l-1.83 1.83 3.75 3.75 1.83-1.83z"/></svg><svg class="ic" style="left:1771.10px;top:1028.90px" width="27.8" height="27.8" viewBox="0 0 24 24" fill="none" stroke="#a3a3a3" stroke-width="2.1"><circle cx="12" cy="12" r="8.95"/><path d="M7.4 7.4l9.2 9.2M16.6 7.4l-9.2 9.2"/></svg>
<div style="position:absolute;left:1823.00px;top:1018.75px;width:198.75px;height:48.00px;background:#616161;border-radius:24px;"></div><span class="t" style="left:1840.55px;top:1031.55px;font-size:22.5px;color:#fff;letter-spacing:0.045px;">Off Hand</span><svg class="ic" style="left:1943.50px;top:1029.00px;" width="27" height="27" viewBox="0 0 24 24"><path fill="#fff" d="M3 17.25V21h3.75L17.81 9.94l-3.75-3.75L3 17.25zM20.71 7.04c.39-.39.39-1.02 0-1.41l-2.34-2.34c-.39-.39-1.02-.39-1.41 0l-1.83 1.83 3.75 3.75 1.83-1.83z"/></svg><svg class="ic" style="left:1982.35px;top:1028.90px" width="27.8" height="27.8" viewBox="0 0 24 24" fill="none" stroke="#a3a3a3" stroke-width="2.1"><circle cx="12" cy="12" r="8.95"/><path d="M7.4 7.4l9.2 9.2M16.6 7.4l-9.2 9.2"/></svg>
<div style="position:absolute;left:2206.50px;top:1007.00px;width:36.00px;height:36.00px;background:#4b95f0;border-radius:50%;box-shadow:0 4.5px 7.5px -1.5px rgba(0,0,0,.2),0 9px 15px 0 rgba(0,0,0,.14),0 1.5px 27px 0 rgba(0,0,0,.12);"></div><svg class="ic" style="left:2210.50px;top:1011.00px;" width="28" height="28" viewBox="0 0 24 24"><path fill="#fff" d="M19 13h-6v6h-2v-6H5v-2h6V5h2v6h6v2z"/></svg>
<span class="t" style="left:1594.30px;top:1073.55px;font-size:22.5px;color:rgba(255,255,255,.42);letter-spacing:-0.550px;">Search item</span>
<div style="position:absolute;left:1559.30px;top:1141.80px;width:719.70px;height:1.40px;background:#dedede;"></div>
<div style="position:absolute;left:1818.00px;top:1167.00px;width:120.75px;height:53.75px;background:#4b95f0;border-radius:6px;box-shadow:0 4.5px 1.5px -3px rgba(0,0,0,.2),0 3px 3px rgba(0,0,0,.14),0 1.5px 7.5px rgba(0,0,0,.12);"></div><span class="t sb" style="left:1841.30px;top:1183.53px;font-size:21.94px;color:#fff;letter-spacing:0.250px;">Update</span>
<div style="position:absolute;left:1950.75px;top:1167.00px;width:176.00px;height:53.75px;background:#4b95f0;border-radius:6px;box-shadow:0 4.5px 1.5px -3px rgba(0,0,0,.2),0 3px 3px rgba(0,0,0,.14),0 1.5px 7.5px rgba(0,0,0,.12);"></div><span class="t sb" style="left:1974.30px;top:1183.53px;font-size:21.94px;color:#fff;letter-spacing:-0.160px;">Save as New</span>
<span class="t sb" style="left:2163.55px;top:1183.53px;font-size:21.94px;color:#fff;letter-spacing:-0.424px;">Cancel</span>
</section>
<div style="position:absolute;left:3836.00px;top:62.00px;width:1.00px;height:1980.00px;background:#2a2e5e;"></div>
</div></body></html>
